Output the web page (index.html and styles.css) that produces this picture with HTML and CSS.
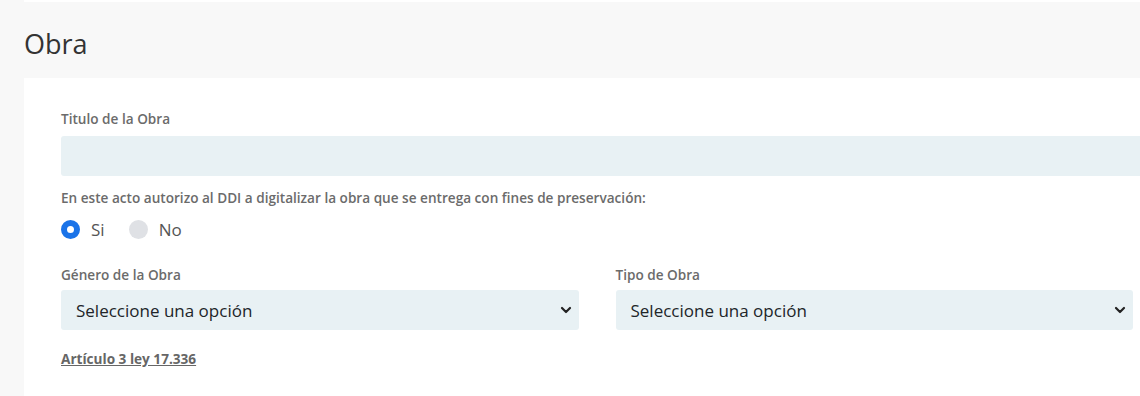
FILE: index.html
```html
<!DOCTYPE html>
<html lang="es">
<head>
    <meta charset="utf-8">
    <title>Obra</title>
    <link rel="stylesheet" href="styles.css">
</head>
<body>

<div class="strip"></div>
<div class="header">Obra</div>

<div class="card">
    <div class="label">Titulo de la Obra</div>
    <div class="input input-wide"></div>

    <div class="label label-q">En este acto autorizo al DDI a digitalizar la obra que se entrega con fines de preservación:</div>
    <div class="radios">
        <span class="radio"><i class="dot dot-on"></i>Si</span>
        <span class="radio"><i class="dot"></i>No</span>
    </div>

    <div class="row">
        <div class="field">
            <div class="label">Género de la Obra</div>
            <div class="input select">
                <span>Seleccione una opción</span>
                <svg width="12" height="8" viewBox="0 0 12 8"><path d="M2 2l4 4 4-4" fill="none" stroke="#222" stroke-width="2.2" stroke-linecap="round" stroke-linejoin="round"/></svg>
            </div>
        </div>
        <div class="field">
            <div class="label">Tipo de Obra</div>
            <div class="input select">
                <span>Seleccione una opción</span>
                <svg width="12" height="8" viewBox="0 0 12 8"><path d="M2 2l4 4 4-4" fill="none" stroke="#222" stroke-width="2.2" stroke-linecap="round" stroke-linejoin="round"/></svg>
            </div>
        </div>
    </div>

    <a class="law" href="#">Artículo 3 ley 17.336</a>
</div>

</body>
</html>
```

FILE: styles.css
```css
html, body { margin: 0; height: 100%; }
body { background: #f8f8f8; font-family: "Open Sans", "Liberation Sans", sans-serif; overflow: hidden; }

.strip { height: 2px; margin-left: 24px; background: #fff; }
.header { height: 76px; box-sizing: border-box; padding: 24px 0 0 24px; font-size: 27px; line-height: 36px; color: #333; }

.card { margin-left: 24px; background: #fff; padding: 32px 0 0 37px; height: 320px; box-sizing: border-box; overflow: hidden; }

.label { font-size: 13.6px; line-height: 18px; font-weight: 600; color: #6b6b6b; margin-bottom: 8px; white-space: nowrap; }
.label-q { margin: 13px 0 0; }

.input { height: 40px; background: #e8f1f4; border-radius: 3px; box-sizing: border-box; }
.input-wide { width: 1100px; }

.radios { display: flex; gap: 24px; margin-top: 11px; height: 22px; align-items: center; }
.radio { display: flex; align-items: center; gap: 11px; font-size: 17px; color: #555; }
.dot { width: 19px; height: 19px; border-radius: 50%; background: #dfe1e5; box-sizing: border-box; }
.dot-on { background: #fff; border: 6px solid #1a73e8; }

.row { display: grid; grid-template-columns: 1fr 1fr; gap: 37px; width: 1072px; margin-top: 26px; }
.row .label { margin-bottom: 6px; }
.select { display: flex; align-items: center; justify-content: space-between; padding: 0 7px 0 15px; font-size: 17px; color: #212529; }

.law { display: inline-block; margin-top: 20px; font-size: 13.6px; line-height: 18px; font-weight: 700; color: #666; }
```
